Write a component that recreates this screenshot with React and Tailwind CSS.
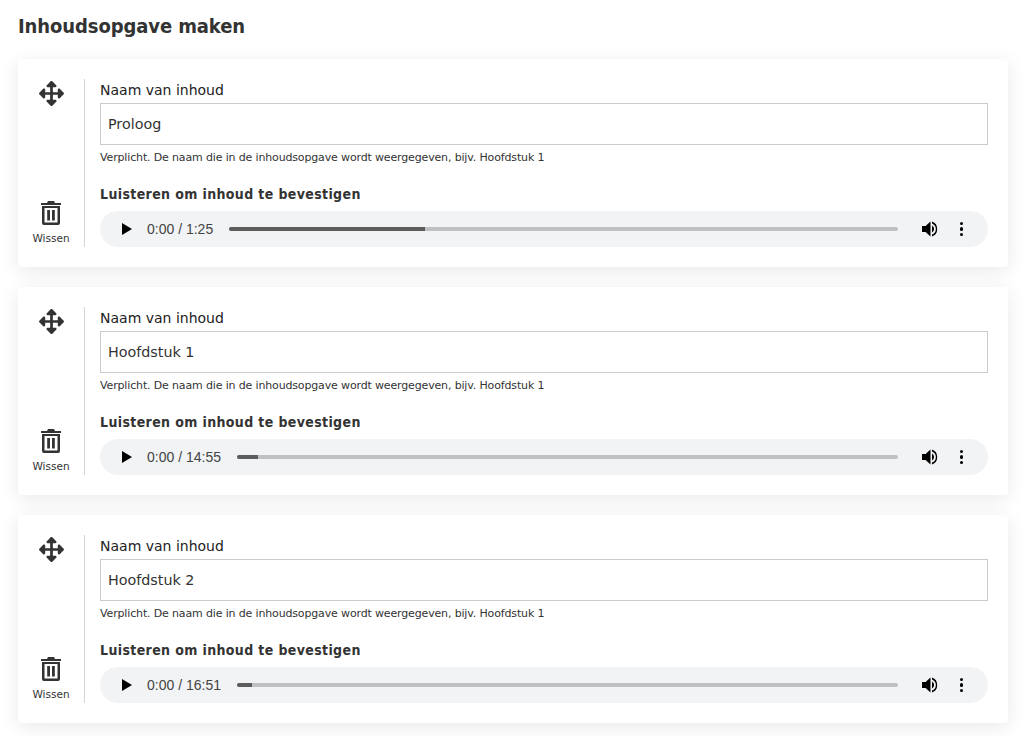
import { FaArrowsAlt } from "react-icons/fa";

const chapters = [
  { name: "Proloog", duration: "1:25", progress: "w-[196px]" },
  { name: "Hoofdstuk 1", duration: "14:55", progress: "w-[21px]" },
  { name: "Hoofdstuk 2", duration: "16:51", progress: "w-[15px]" },
];

const TrashIcon = () => (
  <svg width="22" height="24" viewBox="0 0 22 24" fill="#333">
    <path d="M8 0h6l1 2h6v2H1V2h6z" />
    <path d="M2 5h18v17a2 2 0 0 1-2 2H4a2 2 0 0 1-2-2zm2.500 2v14.500h13V7z" fillRule="evenodd" />
    <rect x="7.200" y="9" width="2.800" height="10.500" />
    <rect x="12" y="9" width="2.800" height="10.500" />
  </svg>
);

const VolumeIcon = () => (
  <svg width="18" height="18" viewBox="0 0 18 18" fill="#000">
    <path d="M1 6v6h3.6L9.5 16.500V1.500L4.600 6z" />
    <path d="M11 5.500a4 4 0 0 1 0 7z" />
    <path d="M11 1.500v1.900a6 6 0 0 1 0 11.200v1.900a8 8 0 0 0 0-15z" />
  </svg>
);

const AudioBar = ({ duration, progress }) => (
  <div className="flex h-9 items-center rounded-full bg-[#f1f3f4] pl-[21px] pr-[25px] font-['Liberation_Sans',sans-serif] text-[14px] text-[#444]">
    <svg width="12" height="14" viewBox="0 0 12 14" fill="#000">
      <path d="M1 1v12l10-6z" />
    </svg>
    <span className="ml-[14px] whitespace-nowrap">0:00 / {duration}</span>
    <div className="ml-4 h-1 flex-1 overflow-hidden rounded-full bg-[#bfc0c2]">
      <div className={`h-1 bg-[#5c5c5c] ${progress}`} />
    </div>
    <div className="ml-[23px] flex items-center">
      <VolumeIcon />
    </div>
    <div className="ml-[21px] flex flex-col gap-[2px]">
      <span className="h-[3.5px] w-[3.5px] rounded-full bg-black" />
      <span className="h-[3.5px] w-[3.5px] rounded-full bg-black" />
      <span className="h-[3.5px] w-[3.5px] rounded-full bg-black" />
    </div>
  </div>
);

const ChapterCard = ({ chapter }) => (
  <div className="flex rounded-[4px] bg-white py-5 shadow-[0_4px_20px_rgba(0,0,0,0.09)]">
    <div className="flex w-[67px] flex-col items-center justify-between border-r border-[#d4d4d4] pt-[2px]">
      <FaArrowsAlt className="text-[25px] text-[#333]" />
      <div className="flex flex-col items-center text-[10.500px] leading-[14px] text-[#333]">
        <TrashIcon />
        <span className="mt-[6px] mb-[2px]">Wissen</span>
      </div>
    </div>
    <div className="ml-[15px] mr-5 flex-1">
      <label className="block h-6 text-[14px] leading-[22px] text-[#222]">Naam van inhoud</label>
      <input
        readOnly
        value={chapter.name}
        className="block h-[42px] w-full border border-[#ccc] px-[7px] text-[14.300px] text-[#333] outline-none"
      />
      <p className="mt-[5px] h-[18px] text-[11px] leading-[16px] tracking-[-0.15px] text-[#333]">
        Verplicht. De naam die in de inhoudsopgave wordt weergegeven, bijv. Hoofdstuk 1
      </p>
      <h3 className="mt-4 mb-[7px] h-[20px] font-['DejaVu_Sans_Condensed','DejaVu_Sans',sans-serif] text-[14px] font-bold leading-[20px] tracking-[0.37px] text-[#333]">
        Luisteren om inhoud te bevestigen
      </h3>
      <AudioBar duration={chapter.duration} progress={chapter.progress} />
    </div>
  </div>
);

export default function App() {
  return (
    <div className="h-[736px] overflow-hidden bg-white pl-[18px] pr-[25px] font-['DejaVu_Sans',sans-serif]">
      <h1 className="h-[59px] pt-[11px] font-['DejaVu_Sans_Condensed','DejaVu_Sans',sans-serif] text-[20px] font-bold leading-[30px] tracking-[-0.1px] text-[#333]">Inhoudsopgave maken</h1>
      <div className="flex flex-col gap-5">
        {chapters.map((chapter) => (
          <ChapterCard key={chapter.name} chapter={chapter} />
        ))}
      </div>
    </div>
  );
}
